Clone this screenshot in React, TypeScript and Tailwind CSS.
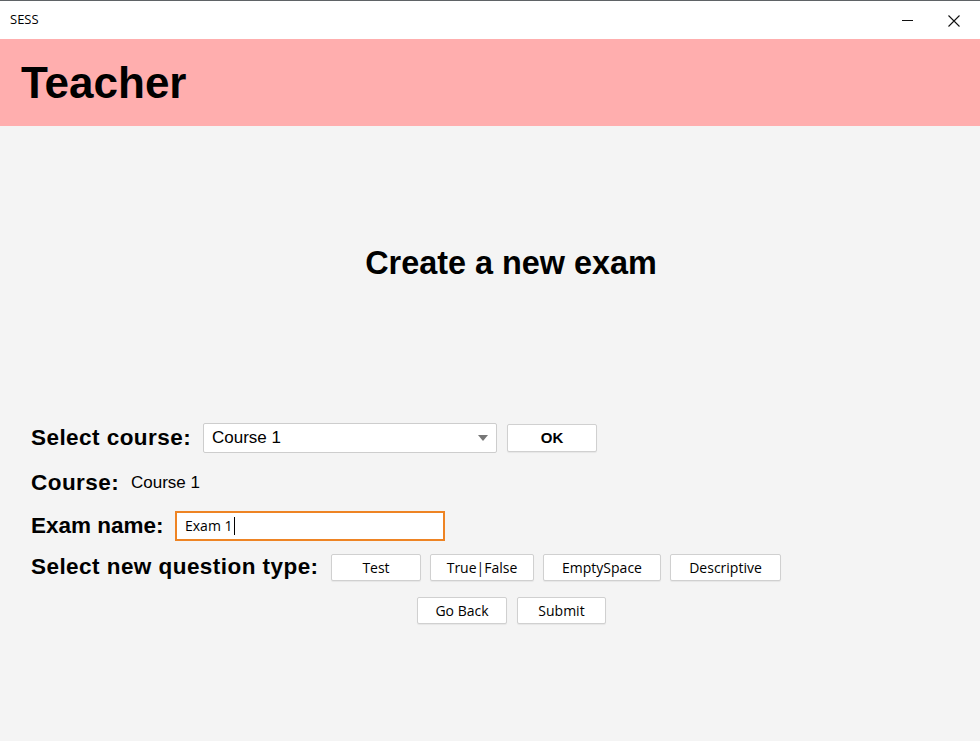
export default function App() {
  const types = ["Test", "True|False", "EmptySpace", "Descriptive"];
  const typeWidths = ["w-[90px]", "w-[104px]", "w-[118px]", "w-[111px]"];

  return (
    <div className="flex h-[741px] w-[980px] flex-col overflow-hidden bg-[#f4f4f4] font-['Liberation_Sans',Arial,sans-serif] text-black">
      {/* window title bar */}
      <div className="flex h-[39px] shrink-0 items-center border-t border-[#5f6366] bg-white pl-[10px]">
        <span className="font-['Open_Sans',sans-serif] text-[13px]">SESS</span>
        <div className="ml-auto flex items-center">
          <svg width="46" height="38" viewBox="0 0 46 38">
            <line x1="17" y1="19.5" x2="28" y2="19.5" stroke="#111" strokeWidth="1" />
          </svg>
          <svg width="46" height="38" viewBox="0 0 46 38" className="mr-[3px]">
            <path d="M17.5 14.5 L28.5 25.5 M28.5 14.5 L17.5 25.5" stroke="#111" strokeWidth="1.1" />
          </svg>
        </div>
      </div>

      {/* header */}
      <div className="flex h-[87px] shrink-0 items-center bg-[#ffaeae] pl-[21px]">
        <h1 className="text-[44px] font-bold leading-none">Teacher</h1>
      </div>

      <div className="flex-1">
        <div className="flex justify-center pl-[42px] pt-[119px]">
          <h2 className="text-[32.4px] font-bold leading-[36px]">Create a new exam</h2>
        </div>

        <div className="mt-[142px] px-[31px]">
          <div className="flex h-[30px] items-center">
            <span className="w-[172px] text-[22.5px] font-bold tracking-[0.45px]">Select course:</span>
            <div className="flex h-[30px] w-[294px] items-center rounded-[2px] border border-[#cdcdcd] bg-white pl-[8px] pr-[8px]">
              <span className="text-[17px]">Course 1</span>
              <span className="ml-auto h-0 w-0 border-x-[5px] border-t-[6px] border-x-transparent border-t-[#777]" />
            </div>
            <button className="ml-[10px] h-[28px] w-[90px] rounded-[2px] border border-[#d0d0d0] bg-white text-[15px] font-bold shadow-[0_1px_1px_rgba(0,0,0,0.06)]">
              OK
            </button>
          </div>

          <div className="mt-[15px] flex h-[30px] items-center">
            <span className="w-[100px] text-[22.5px] font-bold tracking-[0.45px]">Course:</span>
            <span className="text-[17px]">Course 1</span>
          </div>

          <div className="mt-[13px] flex h-[29px] items-center">
            <span className="w-[144px] text-[22.5px] font-bold">Exam name:</span>
            <div className="flex h-[30px] w-[270px] items-center border-2 border-[#ee8424] bg-white pl-[8px] font-['Open_Sans',sans-serif] text-[14px]">
              Exam 1<span className="ml-[1px] inline-block h-[18px] w-px bg-black" />
            </div>
          </div>

          <div className="mt-[14px] flex h-[26px] items-center">
            <span className="w-[300px] text-[22.5px] font-bold tracking-[0.45px]">Select new question type:</span>
            <div className="flex gap-[9px]">
              {types.map((t, i) => (
                <button
                  key={t}
                  className={`h-[27px] ${typeWidths[i]} rounded-[2px] border border-[#d0d0d0] bg-white font-['Open_Sans',sans-serif] text-[14px] shadow-[0_1px_1px_rgba(0,0,0,0.06)]`}
                >
                  {t}
                </button>
              ))}
            </div>
          </div>

          <div className="mt-[17px] flex h-[26px] gap-[10px] pl-[386px]">
            <button className="h-[27px] w-[90px] rounded-[2px] border border-[#d0d0d0] bg-white font-['Open_Sans',sans-serif] text-[14px] shadow-[0_1px_1px_rgba(0,0,0,0.06)]">
              Go Back
            </button>
            <button className="h-[27px] w-[89px] rounded-[2px] border border-[#d0d0d0] bg-white font-['Open_Sans',sans-serif] text-[14px] shadow-[0_1px_1px_rgba(0,0,0,0.06)]">
              Submit
            </button>
          </div>
        </div>
      </div>
    </div>
  );
}
